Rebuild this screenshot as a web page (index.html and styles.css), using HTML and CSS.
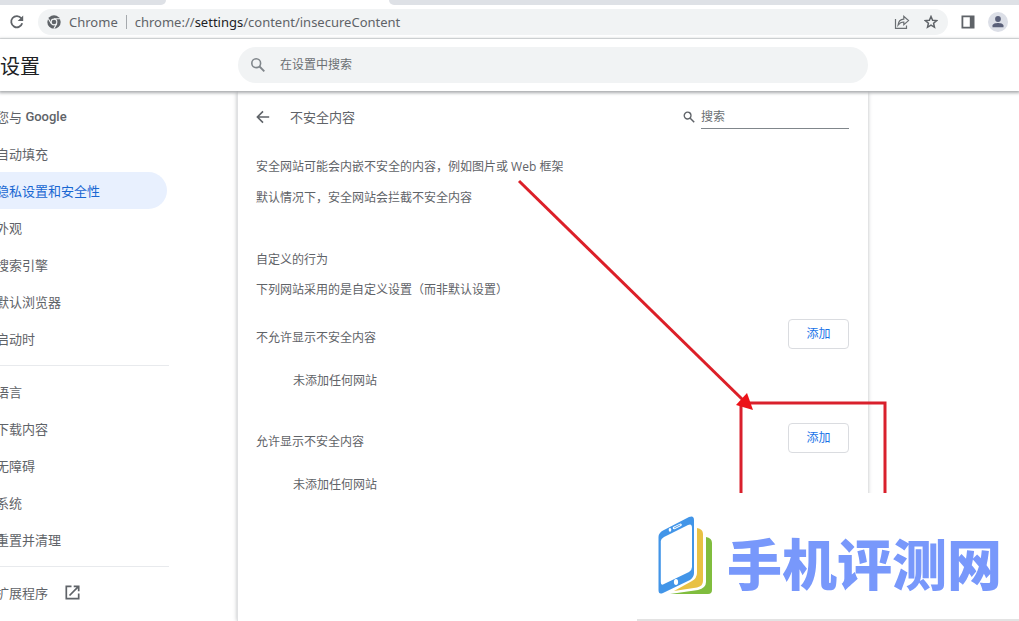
FILE: index.html
```html
<!DOCTYPE html>
<html lang="zh-CN">
<head>
<meta charset="utf-8">
<title>设置 - 不安全内容</title>
<link rel="stylesheet" href="styles.css">
</head>
<body>
<div class="tabstrip"><div class="tab-before"></div><div class="tab-active"></div><div class="tab-after"></div></div>
<div class="toolbar">
  <button class="icon-button" aria-label="重新加载">
    <svg width="16" height="16" viewBox="0 0 16 16" fill="none"><path d="M13.2 9.3A5.6 5.6 0 1 1 12.3 4.3" stroke="#5f6368" stroke-width="1.8"/><path d="M14.2 1.5V7H8.7Z" fill="#5f6368"/></svg>
  </button>
  <div class="omnibox">
    <svg width="14" height="14" viewBox="0 0 14 14"><circle cx="7" cy="7" r="6.7" fill="#5f6368"/><circle cx="7" cy="7" r="3.4" fill="#f1f3f4"/><circle cx="7" cy="7" r="2.3" fill="#5f6368"/><path d="M7 3.8H13M4.2 8.6L1.2 3.4M9.8 8.6L6.8 13.7" stroke="#f1f3f4" stroke-width="1.1"/></svg>
    <span class="site">Chrome</span>
    <span class="bar"></span>
    <span class="url">chrome://<b>settings</b>/content/insecureContent</span>
    <button class="icon-button" aria-label="分享">
      <svg width="16" height="16" viewBox="0 0 16 16" fill="none" stroke="#6b6f73" stroke-width="1.2"><path d="M1.5 5V14.3H12.5V11.5"/><path d="M4 11.2C4.4 7.4 6.4 5.4 9.8 5.2V2.4L14.5 6.6L9.8 10.6V8C7.2 8 5.6 9 4 11.2Z"/></svg>
    </button>
    <button class="icon-button" aria-label="收藏">
      <svg width="14" height="14" viewBox="0 0 14 14" fill="none" stroke="#5f6368" stroke-width="1.5"><path d="M7 1.5L8.6 5.2L12.7 5.6L9.6 8.3L10.5 12.3L7 10.2L3.5 12.3L4.4 8.3L1.3 5.6L5.4 5.2Z"/></svg>
    </button>
  </div>
  <button class="icon-button panel-button" aria-label="侧边栏">
    <svg width="14" height="14" viewBox="0 0 14 14"><path d="M.5.5H13.5V13.5H.5ZM2.3 2.3V11.7H8.8V2.3Z" fill="#5f6368" fill-rule="evenodd"/></svg>
  </button>
  <button class="icon-button avatar" aria-label="个人资料">
    <svg width="20" height="20" viewBox="0 0 20 20"><circle cx="10" cy="10" r="10" fill="#dcdfe7"/><circle cx="10" cy="7" r="2.9" fill="#5a6079"/><path d="M4.5 15.3V13.6C4.5 11.8 7.8 11 10 11S15.5 11.8 15.5 13.6V15.3Z" fill="#5a6079"/></svg>
  </button>
</div>
<header class="header">
  <h1 class="heading">设置</h1>
  <label class="search">
    <svg width="16" height="16" viewBox="0 0 16 16" fill="none" stroke="#80868b"><circle cx="6.2" cy="6.2" r="4.4" stroke-width="1.6"/><path d="M9.5 9.5L14.3 14.3" stroke-width="1.9"/></svg>
    <input type="text" placeholder="在设置中搜索" aria-label="在设置中搜索">
  </label>
</header>
<div class="page">
  <nav class="sidebar">
    <a href="#" class="item">您与&nbsp;<strong>Google</strong></a>
    <a href="#" class="item">自动填充</a>
    <a href="#" class="item selected">隐私设置和安全性</a>
    <a href="#" class="item">外观</a>
    <a href="#" class="item">搜索引擎</a>
    <a href="#" class="item">默认浏览器</a>
    <a href="#" class="item">启动时</a>
    <hr>
    <a href="#" class="item">语言</a>
    <a href="#" class="item">下载内容</a>
    <a href="#" class="item">无障碍</a>
    <a href="#" class="item">系统</a>
    <a href="#" class="item">重置并清理</a>
    <hr>
    <a href="#" class="item">扩展程序
      <svg class="external" width="15" height="15" viewBox="0 0 15 15" fill="none" stroke="#5f6368" stroke-width="1.7"><path d="M6.5 1.3H1.3V13.7H13.7V8.5"/><path d="M8.7 1.3H13.7V6.3M13.3 1.7L4.5 10.5"/></svg>
    </a>
  </nav>
  <main class="panel">
    <div class="titlebar">
      <button class="icon-button" aria-label="返回">
        <svg width="14" height="14" viewBox="0 0 14 14" fill="none" stroke="#5f6368" stroke-width="1.6"><path d="M13.2 7H1.8M7 1.4L1.4 7L7 12.6"/></svg>
      </button>
      <h2 class="title">不安全内容</h2>
      <label class="filter">
        <svg width="12" height="12" viewBox="0 0 12 12" fill="none" stroke="#5f6368"><circle cx="4.6" cy="4.6" r="3.4" stroke-width="1.3"/><path d="M7.2 7.2L11.2 11.2" stroke-width="1.5"/></svg>
        <input type="text" placeholder="搜索" aria-label="搜索">
      </label>
    </div>
    <section class="intro">
      <p>安全网站可能会内嵌不安全的内容，例如图片或 Web 框架</p>
      <p>默认情况下，安全网站会拦截不安全内容</p>
    </section>
    <section class="custom">
      <p>自定义的行为</p>
      <p>下列网站采用的是自定义设置（而非默认设置）</p>
    </section>
    <section class="sites">
      <div class="row"><span>不允许显示不安全内容</span><button class="add">添加</button></div>
      <p class="empty">未添加任何网站</p>
    </section>
    <section class="sites">
      <div class="row"><span>允许显示不安全内容</span><button class="add">添加</button></div>
      <p class="empty">未添加任何网站</p>
    </section>
    <svg class="annotation" width="372" height="315" viewBox="0 0 372 315" fill="none"><path d="M226 315V225H370V315" stroke="#d9202c" stroke-width="3"/><path d="M4 3L228 222" stroke="#dc1f28" stroke-width="3"/><path d="M238 232L221 227L232 215Z" fill="#ec1219"/></svg>
  </main>
</div>
<aside class="watermark">
  <svg width="56" height="80" viewBox="0 0 56 80"><path d="M13 78L41 74Q49 72 49 66V21Q55 22 55 27V74Q55 78 51 78Z" fill="#80bd3e"/><path d="M17 75L35 65Q40 62 40 57V12Q46 13 46 18V65Q46 70 40 71.500Z" fill="#e8c144"/><path fill-rule="evenodd" d="M1.500 21Q1.500 17 6 14.500L32 1Q37 -1 37 4V57Q37 61 33 64L6 77Q1.500 79 1.500 74ZM3.800 25V66Q3.800 70 7 68L32 56Q35 54 35 51V12Q35 7 31 9L7 21Q3.800 23 3.800 25Z" fill="#4295e8"/><path d="M17 12L23.500 8.800" stroke="#fff" stroke-width="2.600" stroke-linecap="round"/><path d="M17.200 11.900L23.300 8.900" stroke="#4295e8" stroke-width=".9"/><ellipse cx="13" cy="13.800" rx="1.300" ry="1.900" fill="#fff"/><ellipse cx="19" cy="66" rx="2.100" ry="3" fill="#fff"/></svg>
  <span class="brand">手机评测网</span>
</aside>
</body>
</html>
```
FILE: styles.css
```css
* { box-sizing: border-box; }
body {
  margin: 0;
  min-height: 100vh;
  display: flex;
  flex-direction: column;
  overflow-x: hidden;
  background: #fff;
  color: #5f6368;
  font-family: "Open Sans", "Noto Sans CJK SC", sans-serif;
  font-size: 12px;
  line-height: 20px;
}
p, h1, h2 { margin: 0; font-weight: 400; }
button, input { font: inherit; color: inherit; }
input { border: 0; padding: 0; background: none; outline: 0; min-width: 0; }
input::placeholder { color: #6b6f73; opacity: 1; }
svg { display: block; flex: none; }
.icon-button { display: grid; place-items: center; border: 0; padding: 0; background: none; }

.tabstrip { display: flex; height: 5px; background: #fff; }
.tab-before { width: 166px; background: #dee1e6; border-bottom-right-radius: 5px; }
.tab-active { width: 223px; }
.tab-after { flex: 1; background: #dee1e6; border-bottom-left-radius: 5px; }

.toolbar {
  display: flex;
  align-items: center;
  height: 34px;
  padding: 0 11px 0 9px;
  border-bottom: 1px solid #e3e5e7;
}
.omnibox {
  flex: 1;
  display: flex;
  align-items: center;
  height: 26px;
  margin-left: 13px;
  padding: 0 10px 0 9px;
  border-radius: 13px;
  background: #f1f3f4;
  font-family: "Noto Sans", sans-serif;
  font-size: 13px;
}
.site { margin-left: 8px; }
.bar { width: 1px; height: 14px; margin: 0 8px; background: #a5a9ad; }
.url { flex: 1; }
.url b { font-weight: 400; color: #202124; }
.omnibox .icon-button { margin-left: 14px; }
.panel-button { margin-left: 13px; }
.avatar { margin-left: 13px; }

.header {
  position: relative;
  z-index: 1;
  display: grid;
  grid-template-columns: 238px minmax(0, 630px) 1fr;
  align-items: center;
  height: 52px;
  background: #fff;
  box-shadow: 0 1px 3px 1px #a8aaad;
}
.heading { padding-top: 3px; font-size: 20px; line-height: 28px; color: #202124; }
.search {
  display: flex;
  align-items: center;
  gap: 14px;
  height: 36px;
  padding: 0 12px;
  border-radius: 18px;
  background: #f1f3f4;
}
.search input { flex: 1; }

.page {
  flex: 1;
  display: grid;
  grid-template-columns: 237px minmax(0, 631px) 1fr;
}
.sidebar { padding-top: 7px; margin-left: -4px; font-size: 13px; }
.item {
  display: flex;
  align-items: center;
  width: 171px;
  height: 37px;
  color: #5f6368;
  text-decoration: none;
}
.item strong { font-family: Roboto, sans-serif; font-weight: 500; }
.selected { border-radius: 0 19px 19px 0; background: #e8f0fe; color: #1967d2; }
.sidebar hr { width: 173px; height: 1px; margin: 8px 0 7px; border: 0; background: #e8eaed; }
.external { margin-left: 17px; }

.panel {
  position: relative;
  padding: 0 19px 0 18px;
  border-left: 1px solid #e0e1e3;
  box-shadow: 0 0 4px #b8babd;
}
.titlebar { display: flex; align-items: center; height: 51px; }
.title { flex: 1; margin-left: 20px; font-size: 13px; line-height: 20px; }
.filter { display: flex; align-items: center; gap: 6px; }
.filter input { width: 148px; height: 25px; border-bottom: 1px solid #80868b; }
.intro { display: grid; gap: 11px; padding-top: 15px; }
.custom { display: grid; gap: 10px; padding: 42px 0 19px; }
.row { display: flex; align-items: flex-start; justify-content: space-between; height: 40px; }
.row span { padding-top: 9px; }
.sites { height: 104px; }
.empty { padding: 12px 37px; }
.add {
  width: 61px;
  height: 30px;
  padding: 0;
  border: 1px solid #dadce0;
  border-radius: 4px;
  background: #fff;
  color: #1a73e8;
}
.annotation { position: absolute; left: 277px; top: 87px; }

.watermark {
  position: absolute;
  right: 0;
  bottom: 0;
  z-index: 2;
  display: flex;
  align-items: center;
  gap: 14px;
  width: 382px;
  height: 128px;
  padding-left: 20px;
  border-bottom: 2px solid #e3e3e3;
  background: #fff;
  color: #7898fb;
  font-size: 55px;
  font-weight: 900;
  line-height: 80px;
  white-space: nowrap;
}
.brand { padding-top: 16px; }
```
